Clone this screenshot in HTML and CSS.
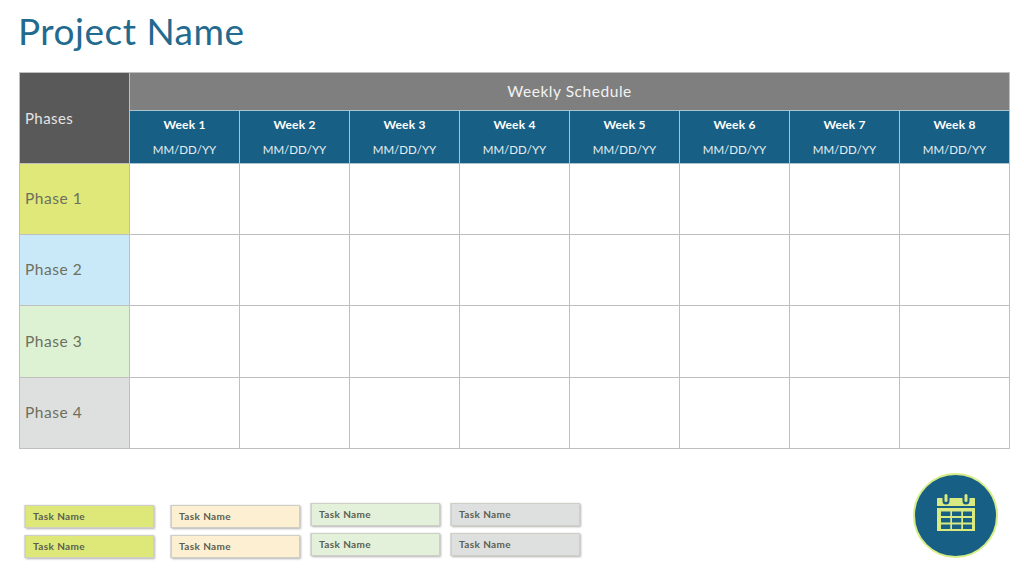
FILE: index.html
```html
<!DOCTYPE html>
<html lang="en">
<head>
<meta charset="utf-8">
<title>Project Name</title>
<link rel="stylesheet" href="styles.css">
</head>
<body>
<h1 class="title">Project Name</h1>
<table class="schedule">
  <colgroup>
    <col class="col"><col class="col"><col class="col"><col class="col"><col class="col"><col class="col"><col class="col"><col class="col"><col class="col">
  </colgroup>
  <thead>
    <tr class="row-top">
      <th class="phases-head" rowspan="2"><span>Phases</span></th>
      <th class="weekly-head" colspan="8">Weekly Schedule</th>
    </tr>
    <tr class="row-weeks">
      <th class="week"><b>Week 1</b><span>MM/DD/YY</span></th>
      <th class="week"><b>Week 2</b><span>MM/DD/YY</span></th>
      <th class="week"><b>Week 3</b><span>MM/DD/YY</span></th>
      <th class="week"><b>Week 4</b><span>MM/DD/YY</span></th>
      <th class="week"><b>Week 5</b><span>MM/DD/YY</span></th>
      <th class="week"><b>Week 6</b><span>MM/DD/YY</span></th>
      <th class="week"><b>Week 7</b><span>MM/DD/YY</span></th>
      <th class="week"><b>Week 8</b><span>MM/DD/YY</span></th>
    </tr>
  </thead>
  <tbody>
    <tr class="row-phase"><th class="phase lime">Phase 1</th><td></td><td></td><td></td><td></td><td></td><td></td><td></td><td></td></tr>
    <tr class="row-phase"><th class="phase sky">Phase 2</th><td></td><td></td><td></td><td></td><td></td><td></td><td></td><td></td></tr>
    <tr class="row-phase tall"><th class="phase mint">Phase 3</th><td></td><td></td><td></td><td></td><td></td><td></td><td></td><td></td></tr>
    <tr class="row-phase"><th class="phase grey">Phase 4</th><td></td><td></td><td></td><td></td><td></td><td></td><td></td><td></td></tr>
  </tbody>
</table>
<div class="footer">
  <div class="legend">
    <div class="task-col low first">
      <div class="task t-lime">Task Name</div>
      <div class="task t-lime">Task Name</div>
    </div>
    <div class="task-col low second">
      <div class="task t-cream">Task Name</div>
      <div class="task t-cream">Task Name</div>
    </div>
    <div class="task-col third">
      <div class="task t-mint">Task Name</div>
      <div class="task t-mint">Task Name</div>
    </div>
    <div class="task-col fourth">
      <div class="task t-grey">Task Name</div>
      <div class="task t-grey">Task Name</div>
    </div>
  </div>
  <div class="badge">
    <svg class="cal" viewBox="0 0 38 37" width="38" height="37" aria-hidden="true">
      <path class="cal-fill" d="M0 4H5.500V7A3.500 3.500 0 0 0 12.500 7V4H25.500V7A3.500 3.500 0 0 0 32.500 7V4H38V12H0Z"/>
      <rect class="cal-fill" x="7.500" y="0" width="3" height="8" rx="1.500"/>
      <rect class="cal-fill" x="27.500" y="0" width="3" height="8" rx="1.500"/>
      <path class="cal-fill" fill-rule="evenodd" d="M0 14H38V37H0ZM4 17.500V22H13.300V17.500ZM15 17.500V22H24.300V17.500ZM26 17.500V22H35V17.500ZM4 24V28.500H13.300V24ZM15 24V28.500H24.300V24ZM26 24V28.500H35V24ZM4 30.500V35H13.300V30.500ZM15 30.500V35H24.300V30.500ZM26 30.500V35H35V30.500Z"/>
    </svg>
  </div>
</div>
</body>
</html>
```
FILE: styles.css
```css
* { box-sizing: border-box; }
html, body { margin: 0; padding: 0; }
body {
  width: 1024px;
  height: 576px;
  overflow: hidden;
  background: #fff;
  font-family: "Lato", "Open Sans", sans-serif;
  padding: 0 14px 0 19px;
}
.title {
  margin: 0 0 0 -1px;
  height: 72px;
  padding-top: 9px;
  font-size: 37px;
  line-height: 44px;
  font-weight: 400;
  letter-spacing: 0.5px;
  color: #226a8e;
}
.schedule {
  width: 991px;
  height: 376px;
  border-collapse: collapse;
  table-layout: fixed;
}
.col { width: 110px; }
.schedule th, .schedule td {
  border: 1px solid #bfbfbf;
  padding: 0;
}
.row-top { height: 38px; }
.row-weeks { height: 53px; }
.row-phase { height: 71px; }
.row-phase.tall { height: 72px; }
.schedule .phases-head {
  background: #595959;
  color: #e4e4e4;
  font-size: 15px;
  font-weight: 400;
  text-align: left;
  vertical-align: top;
  padding: 36px 0 0 5px;
  letter-spacing: 0.4px;
}
.schedule .weekly-head {
  background: #7f7f7f;
  color: #f2f2f2;
  font-size: 15.500px;
  font-weight: 400;
  letter-spacing: 0.55px;
  border-bottom-color: #a9c3cf;
  padding-bottom: 2px;
}
.schedule .week {
  background: #175f84;
  color: #fff;
  font-weight: 400;
  border-color: #a9c3cf;
  vertical-align: top;
}
.week b {
  display: block;
  font-size: 12px;
  line-height: 16px;
  font-weight: 700;
  padding-top: 6px;
  letter-spacing: 0.2px;
}
.week span {
  display: block;
  font-size: 11.500px;
  line-height: 16px;
  padding-top: 9px;
  color: #e6eef2;
  letter-spacing: 0;
}
.schedule .phase {
  font-size: 15.500px;
  font-weight: 400;
  text-align: left;
  padding: 0 0 2px 5px;
  color: #6d6f5f;
  letter-spacing: 0.55px;
}
.lime { background: #dfe878; }
.sky { background: #c9e9f8; }
.mint { background: #dcf2d3; }
.grey { background: #dee0e0; }
.footer {
  display: flex;
  justify-content: space-between;
  height: 104px;
  padding: 24px 12px 0 6px;
}
.legend {
  display: flex;
  align-items: flex-start;
  padding-top: 30px;
}
.task-col {
  display: flex;
  flex-direction: column;
  gap: 7px;
  width: 129px;
}
.task-col.low { padding-top: 2px; }
.second { margin-left: 17px; }
.third { margin-left: 11px; }
.fourth { margin-left: 11px; }
.task {
  height: 23px;
  line-height: 20px;
  padding-left: 7px;
  font-size: 10px;
  font-weight: 700;
  letter-spacing: 0.4px;
  color: #5b5e52;
  border: 1px solid #cfcfc6;
  box-shadow: 1px 1px 2px rgba(90, 90, 90, 0.45), -1px 0 1px rgba(120, 120, 120, 0.25);
}
.t-lime { background: #dde878; }
.t-cream { background: #fdf0d2; }
.t-mint { background: #e3f0da; }
.t-grey { background: #dee0e0; }
.badge {
  width: 85px;
  height: 85px;
  border-radius: 50%;
  background: #175f84;
  border: 2px solid #d6ec86;
  display: flex;
  align-items: center;
  justify-content: center;
  padding-bottom: 7px;
}
.cal { display: block; }
.cal-fill { fill: #d9ea80; }
```
